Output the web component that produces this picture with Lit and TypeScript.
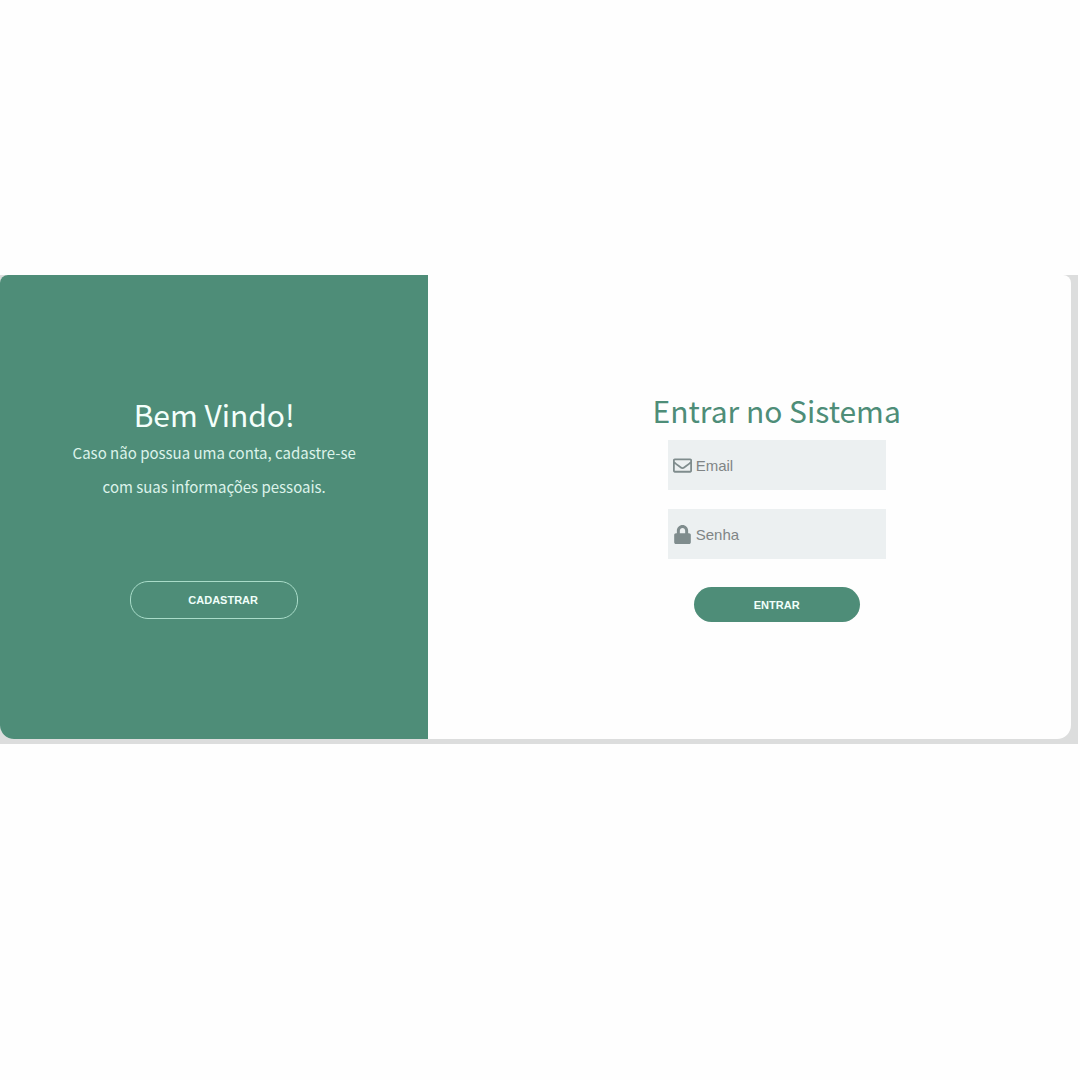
import { LitElement, html, css } from "lit";
import { customElement } from "lit/decorators.js";

@customElement("app-root")
export class AppRoot extends LitElement {
  static styles = css`
    :host {
      display: block;
      box-sizing: border-box;
      min-height: 100vh;
      padding: 275px 2px 0 0;
      background: #fefefe;
      font-family: "Noto Sans CJK JP", "Noto Sans", sans-serif;
    }
    .frame {
      padding: 0 7px 5px 0;
      background: #dcdddd;
    }
    .card {
      display: flex;
      border-radius: 8px 8px 14px 14px;
      overflow: hidden;
      background: #fefefe;
    }
    .panel {
      box-sizing: border-box;
      display: flex;
      flex-direction: column;
      align-items: center;
    }
    .welcome {
      width: 40%;
      padding: 119px 16px 120px;
      background: #4e8d78;
      color: #f4fffb;
    }
    .login {
      width: 60%;
      padding: 115px 0 116px 54px;
      color: #4e8d78;
    }
    .title {
      margin: 0;
      font-size: 30px;
      line-height: 40px;
      font-weight: 400;
      white-space: nowrap;
    }
    .text {
      margin: 2px 0 77px;
      font-size: 15px;
      line-height: 34px;
      text-align: center;
      color: #dcf3ea;
    }
    .form {
      display: flex;
      flex-direction: column;
      align-items: center;
    }
    .field {
      box-sizing: border-box;
      display: flex;
      align-items: center;
      gap: 4px;
      width: 218px;
      height: 50px;
      padding: 0 5px;
      background: #ecf0f1;
    }
    .fields {
      display: flex;
      flex-direction: column;
      gap: 19px;
      margin: 10px 0 28px;
    }
    .icon {
      flex: none;
      width: 19px;
      height: 19px;
      fill: #7f8c8d;
    }
    .input {
      flex: 1;
      min-width: 0;
      height: 48px;
      padding: 0;
      border: 0;
      outline: 0;
      background: transparent;
      color: #555;
      font: 15px "Liberation Sans", Arial, sans-serif;
    }
    .input::placeholder {
      color: #808586;
      opacity: 1;
    }
    .button {
      box-sizing: border-box;
      width: 166px;
      height: 35px;
      padding: 0;
      border: 0;
      border-radius: 18px;
      background: #4e8d78;
      color: #f0fffa;
      font: bold 11px "Liberation Sans", Arial, sans-serif;
      text-transform: uppercase;
      cursor: pointer;
    }
    .outline {
      width: 168px;
      height: 38px;
      padding-left: 18px;
      border: 1px solid #a9dcc9;
      background: transparent;
    }
  `;

  render() {
    return html`
      <main class="frame">
        <div class="card">
          <section class="panel welcome">
            <h2 class="title">Bem Vindo!</h2>
            <p class="text">
              Caso não possua uma conta, cadastre-se<br />com suas informações
              pessoais.
            </p>
            <button class="button outline" type="button">Cadastrar</button>
          </section>
          <section class="panel login">
            <h2 class="title">Entrar no Sistema</h2>
            <form class="form" @submit=${(e: Event) => e.preventDefault()}>
              <div class="fields">
                <label class="field">
                  <svg class="icon" viewBox="0 0 512 512" aria-hidden="true">
                    <path
                      d="M464 64H48C21.500 64 0 85.500 0 112v288c0 26.500 21.500 48 48 48h416c26.500 0 48-21.500 48-48V112c0-26.500-21.500-48-48-48zm0 48v40.800c-22.400 18.300-58.200 46.700-134.600 106.500-16.800 13.200-50.200 45.100-73.400 44.700-23.200.400-56.600-31.500-73.400-44.700C106.200 199.500 70.400 171.100 48 152.800V112h416zM48 400V214.400c22.900 18.300 55.400 43.900 104.900 82.600 21.900 17.200 60.100 55.200 103.100 55 42.700.200 80.500-37.200 103.100-54.900 49.500-38.800 82-64.400 104.900-82.700V400H48z"
                    />
                  </svg>
                  <input class="input" type="email" placeholder="Email" aria-label="Email" />
                </label>
                <label class="field">
                  <svg class="icon" viewBox="0 0 512 512" aria-hidden="true">
                    <path
                      d="M432 224h-24v-72C408 68.200 339.800 0 256 0S104 68.200 104 152v72H80c-26.500 0-48 21.500-48 48v192c0 26.500 21.500 48 48 48h352c26.500 0 48-21.500 48-48V272c0-26.500-21.500-48-48-48zm-104 0H184v-72c0-39.700 32.300-72 72-72s72 32.300 72 72v72z"
                    />
                  </svg>
                  <input class="input" type="password" placeholder="Senha" aria-label="Senha" />
                </label>
              </div>
              <button class="button" type="submit">Entrar</button>
            </form>
          </section>
        </div>
      </main>
    `;
  }
}
